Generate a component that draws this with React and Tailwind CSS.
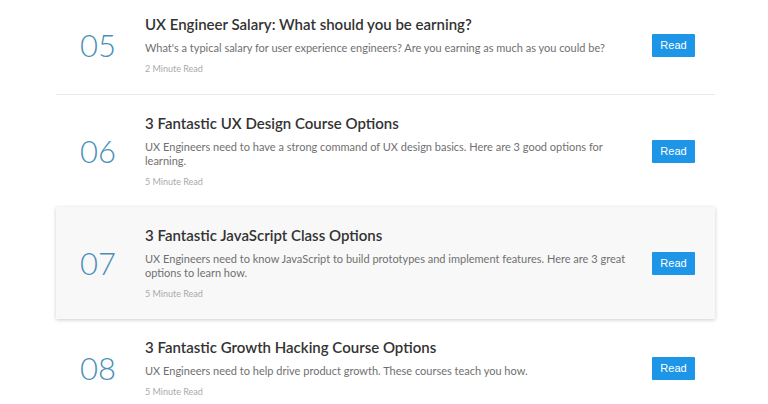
const items = [
  {
    n: "05",
    title: "UX Engineer Salary: What should you be earning?",
    desc: "What's a typical salary for user experience engineers? Are you earning as much as you could be?",
    meta: "2 Minute Read",
  },
  {
    n: "06",
    title: "3 Fantastic UX Design Course Options",
    desc: "UX Engineers need to have a strong command of UX design basics. Here are 3 good options for learning.",
    meta: "5 Minute Read",
  },
  {
    n: "07",
    title: "3 Fantastic JavaScript Class Options",
    desc: "UX Engineers need to know JavaScript to build prototypes and implement features. Here are 3 great options to learn how.",
    meta: "5 Minute Read",
    active: true,
  },
  {
    n: "08",
    title: "3 Fantastic Growth Hacking Course Options",
    desc: "UX Engineers need to help drive product growth. These courses teach you how.",
    meta: "5 Minute Read",
  },
];

export default function App() {
  return (
    <div className="w-[768px] h-[404px] overflow-hidden bg-white" style={{ fontFamily: "Lato, 'Open Sans', sans-serif" }}>
      <div className="ml-[56px] w-[659px] mt-[-4px]">
        {items.map((it, i) => (
          <div
            key={it.n}
            className={
              "flex items-center pl-[24px] pr-[20px] pt-[20px] pb-[19px] " +
              (it.active
                ? "bg-[#f8f8f8] shadow-[0_1px_4px_rgba(0,0,0,0.2)]"
                : i < items.length - 1 && !items[i + 1].active
                ? "border-b border-[#e8e8e8]"
                : "")
            }
          >
            <div className="w-[65px] shrink-0 text-[31px] font-light leading-none text-[#4b8fb8]">{it.n}</div>
            <div className="w-[488px] shrink-0">
              <div className="text-[15px] leading-[16px] font-semibold text-[#333333]">{it.title}</div>
              <div className="mt-[9px] text-[11px] leading-[14px] text-[#707070]">{it.desc}</div>
              <div className="mt-[8px] text-[9px] leading-[12px] text-[#aaaaaa]">{it.meta}</div>
            </div>
            <div className="ml-auto">
              <button
                className="w-[43px] h-[23px] bg-[#1e96e8] text-white text-[11px] rounded-[1px] flex items-center justify-center"
                style={{ fontFamily: "'Liberation Sans', Arial, sans-serif" }}
              >
                Read
              </button>
            </div>
          </div>
        ))}
      </div>
    </div>
  );
}
